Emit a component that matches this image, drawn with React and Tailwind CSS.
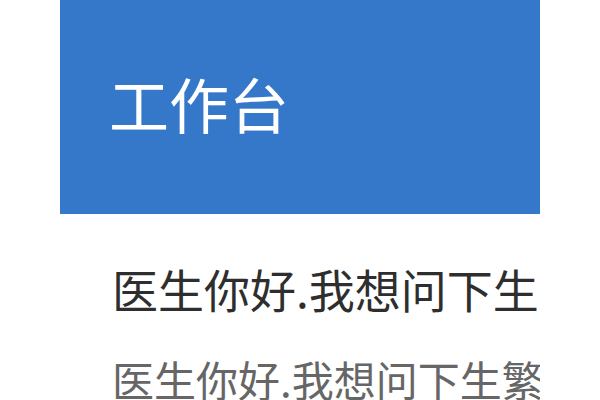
import React from 'react';

const cjk = { fontFamily: '"Noto Sans CJK SC", "Noto Sans", sans-serif' };

const App = () => {
  return (
    <div className="w-[600px] h-[400px] bg-white overflow-hidden" style={cjk}>
      <div className="mx-[60px] w-[480px] overflow-hidden">
        {/* Header */}
        <div className="h-[214px] bg-[#3578c9] flex items-center pl-[49px] pb-[8px]">
          <h1 className="text-[60px] leading-none text-white font-normal">工作台</h1>
        </div>

        {/* Message preview */}
        <div className="pl-[52px] pt-[51px]">
          <p className="text-[46px] leading-none text-[#2e2e2e] whitespace-nowrap">
            医生你好.我想问下生繁
          </p>
          <p className="mt-[47px] text-[42px] leading-none text-[#666666] whitespace-nowrap">
            医生你好.我想问下生繁殖
          </p>
        </div>
      </div>
    </div>
  );
};

export default App;
